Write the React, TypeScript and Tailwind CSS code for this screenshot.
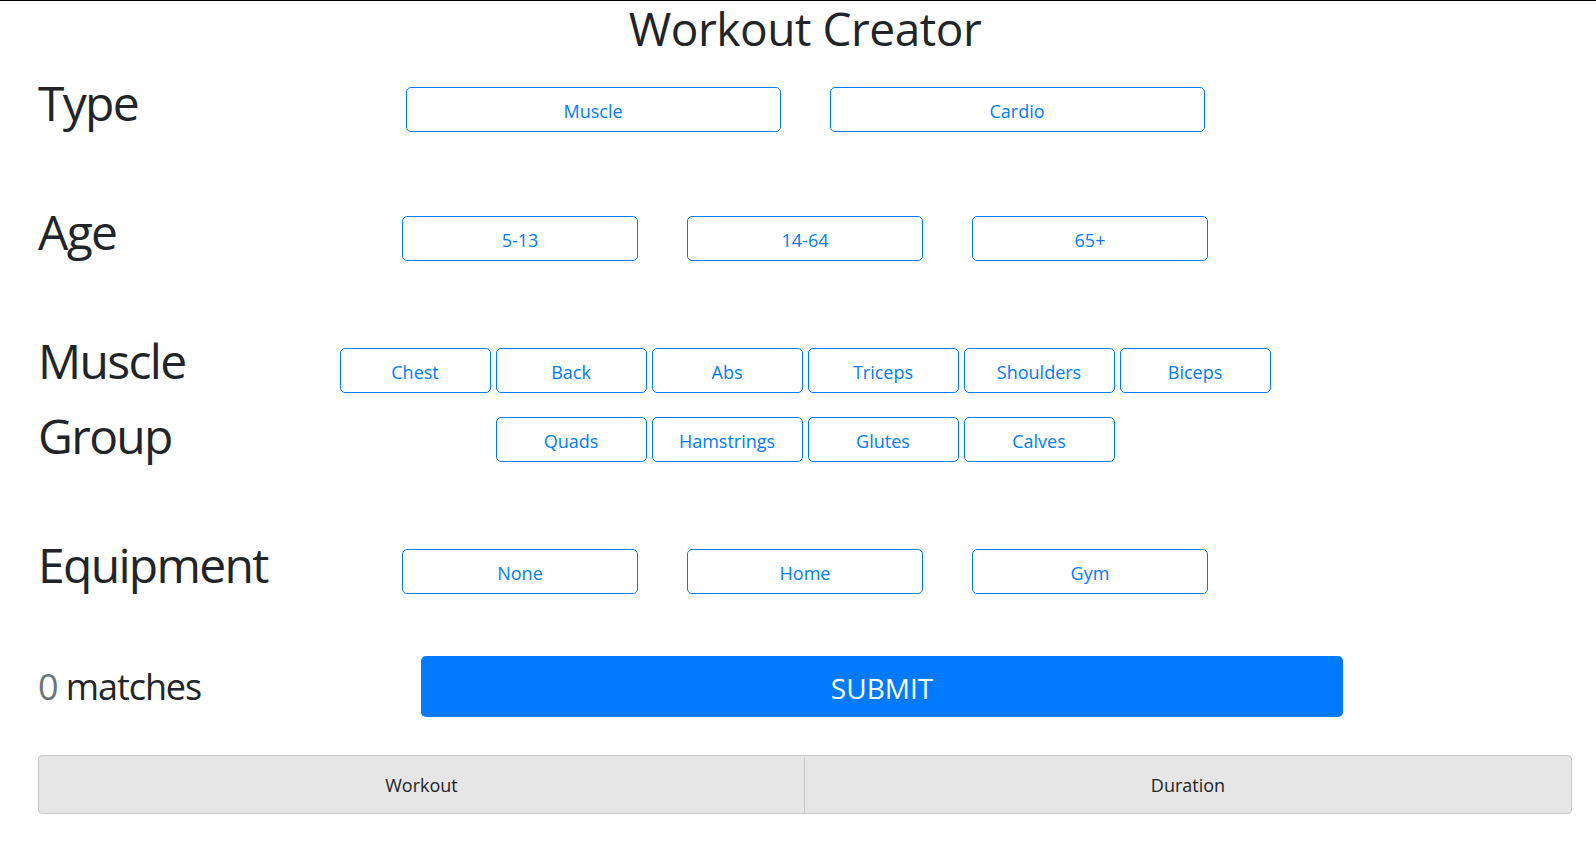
const font = { fontFamily: '"Segoe UI", "Open Sans", "Noto Sans", sans-serif' }

function OptionButton({ label, width }: { label: string; width: string }) {
  return (
    <button
      type="button"
      className={`${width} h-[45px] rounded-[5px] border border-[#007bff] bg-white pt-[3px] text-[18px] text-[#007bff]`}
    >
      {label}
    </button>
  )
}

function Row({ label, children, top = 'pt-[22px]' }: { label: React.ReactNode; children: React.ReactNode; top?: string }) {
  return (
    <div className="grid grid-cols-[256px_1fr_256px]">
      <div className="text-[48px] leading-[75px] tracking-[-0.035em] text-[#212529]">{label}</div>
      <div className={`flex flex-col items-center gap-[24px] ${top}`}>{children}</div>
      <div />
    </div>
  )
}

export default function App() {
  return (
    <div className="min-h-screen border-t border-black bg-white pl-[38px] pr-[24px]" style={font}>
      <h1 className="text-center text-[46px] leading-[54px] tracking-[-0.01em] text-[#212529]">Workout Creator</h1>

      <div className="mt-[10px] flex flex-col gap-[54px]">
        <Row label="Type">
          <div className="flex gap-[49px]">
            <OptionButton label="Muscle" width="w-[375px]" />
            <OptionButton label="Cardio" width="w-[375px]" />
          </div>
        </Row>

        <Row label="Age">
          <div className="flex gap-[49px]">
            <OptionButton label="5-13" width="w-[236px]" />
            <OptionButton label="14-64" width="w-[236px]" />
            <OptionButton label="65+" width="w-[236px]" />
          </div>
        </Row>

        <Row label={<>Muscle<br />Group</>} top="pt-[25px]">
          <div className="flex gap-[5px]">
            {['Chest', 'Back', 'Abs', 'Triceps', 'Shoulders', 'Biceps'].map((m) => (
              <OptionButton key={m} label={m} width="w-[151px]" />
            ))}
          </div>
          <div className="flex gap-[5px]">
            {['Quads', 'Hamstrings', 'Glutes', 'Calves'].map((m) => (
              <OptionButton key={m} label={m} width="w-[151px]" />
            ))}
          </div>
        </Row>

        <Row label="Equipment">
          <div className="flex gap-[49px]">
            <OptionButton label="None" width="w-[236px]" />
            <OptionButton label="Home" width="w-[236px]" />
            <OptionButton label="Gym" width="w-[236px]" />
          </div>
        </Row>
      </div>

      <div className="mt-[54px] grid grid-cols-[383px_922px_1fr] items-center">
        <div className="text-[36px] leading-[60px] tracking-[-0.03em] text-[#212529]">
          <span className="text-[#6c757d]">0</span> matches
        </div>
        <button type="button" className="h-[61px] rounded-[5px] bg-[#007bff] pt-[2px] text-[28px] text-white">
          SUBMIT
        </button>
        <div />
      </div>

      <div className="mt-[38px] grid h-[59px] grid-cols-2 rounded-[4px] border border-[#c8c8c8] bg-[#e6e6e6] pt-[2px] text-[18px] text-[#212529]">
        <div className="flex items-center justify-center border-r border-[#c8c8c8]">Workout</div>
        <div className="flex items-center justify-center">Duration</div>
      </div>
    </div>
  )
}
